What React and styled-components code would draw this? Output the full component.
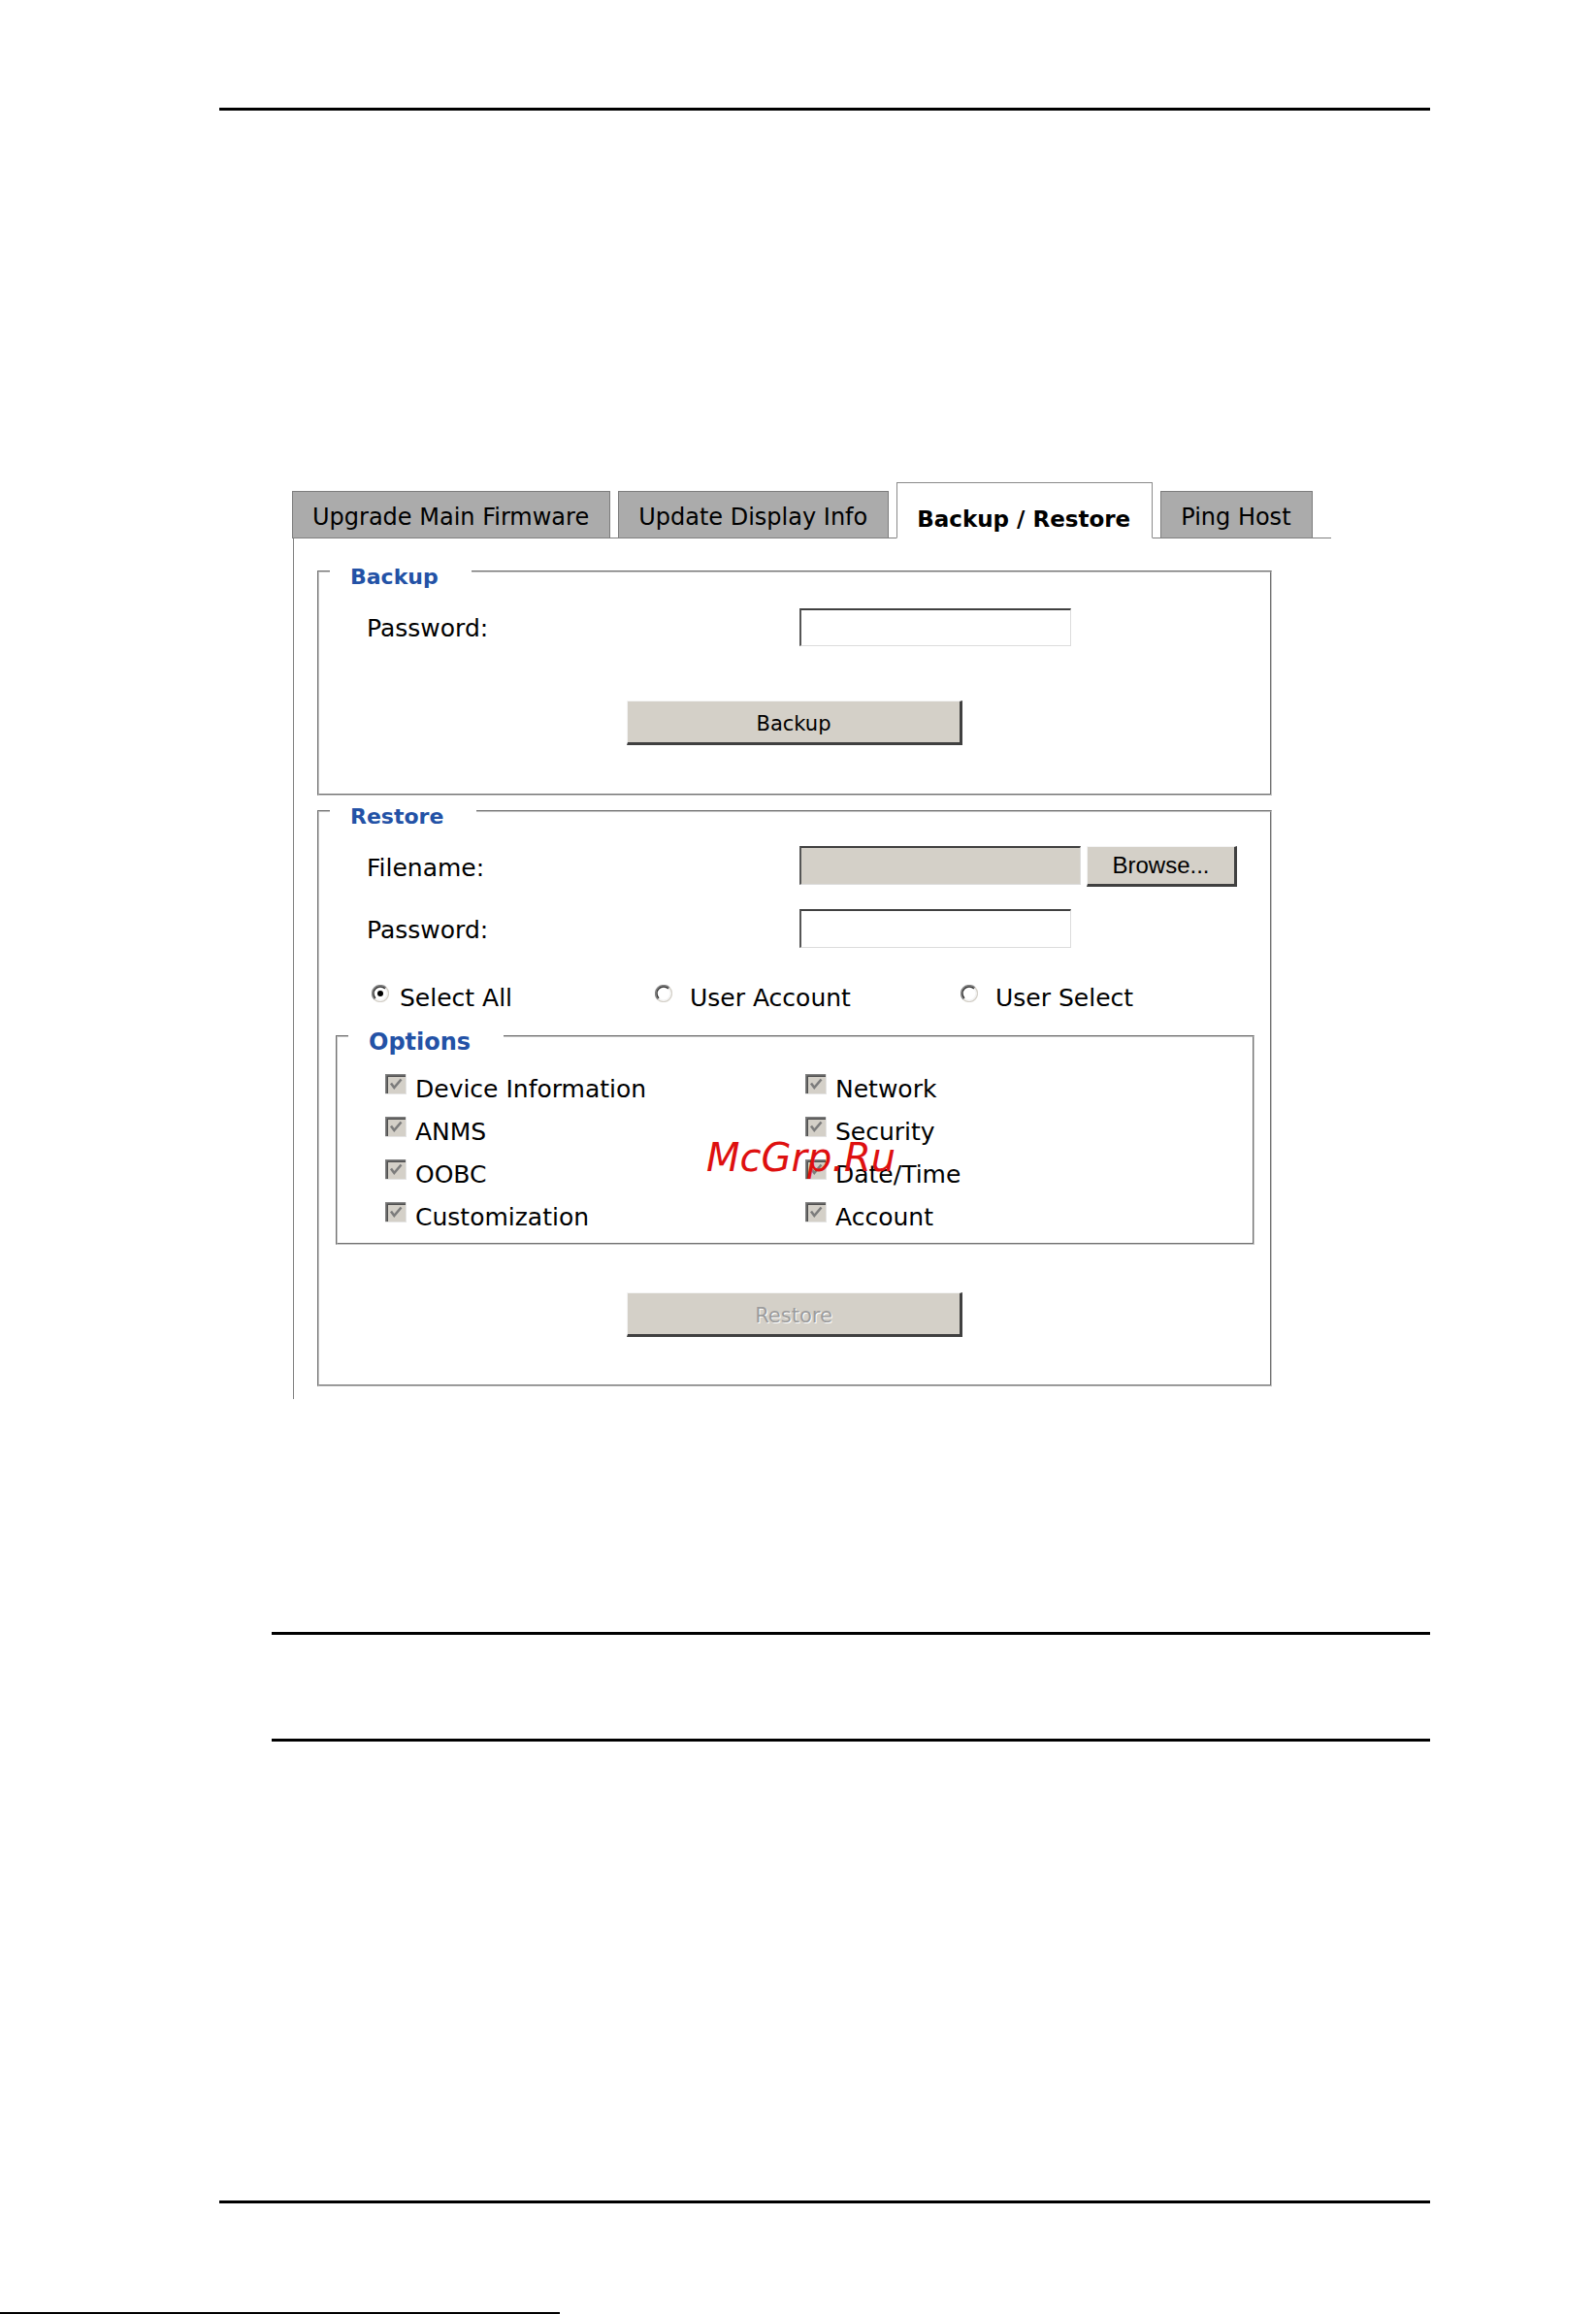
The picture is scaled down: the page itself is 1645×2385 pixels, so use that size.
import React from "react";
import styled, { createGlobalStyle } from "styled-components";

const GlobalStyle = createGlobalStyle`
  html, body { margin: 0; padding: 0; background: #fff; }
  body { font-family: "DejaVu Sans", Verdana, sans-serif; color: #000; }
  * { box-sizing: border-box; }
`;

const Page = styled.div`
  position: relative;
  width: 1645px;
  height: 2385px;
  overflow: hidden;
  background: #fff;
  display: flex;
  flex-direction: column;
  align-items: flex-start;
`;

const Rule = styled.div`
  flex-shrink: 0;
  margin-top: ${(p) => p.$top}px;
  margin-left: ${(p) => p.$left}px;
  width: ${(p) => p.$width}px;
  height: ${(p) => p.$h || 3}px;
  background: #000;
`;

const TabsArea = styled.div`
  margin-top: 383px;
  margin-left: 301px;
  display: flex;
  flex-direction: column;
`;

const TabBar = styled.div`
  display: flex;
  align-items: flex-end;
  gap: 8px;
  width: 1071px;
  border-bottom: 1px solid #808080;
`;

const Tab = styled.div`
  height: ${(p) => (p.$active ? 58 : 48)}px;
  margin-bottom: ${(p) => (p.$active ? -1 : 0)}px;
  padding: 0 ${(p) => (p.$active ? 22 : 21)}px ${(p) => (p.$active ? 5 : 7)}px 20px;
  display: flex;
  align-items: flex-end;
  background: ${(p) => (p.$active ? "#fff" : "#ababab")};
  border: 1px solid ${(p) => (p.$active ? "#8a8a8a" : "#7c7c7c")};
  border-bottom: ${(p) => (p.$active ? "1px solid #fff" : "none")};
  font-size: ${(p) => (p.$active ? 23 : 24)}px;
  font-weight: ${(p) => (p.$active ? 700 : 400)};
  line-height: 28px;
  white-space: nowrap;
  color: #000;
`;

const Panel = styled.div`
  margin-left: 1px;
  border-left: 1px solid #808080;
  padding: 14px 0 13px 24px;
  display: flex;
  flex-direction: column;
`;

const Group = styled.fieldset`
  width: ${(p) => (p.$width ? `${p.$width}px` : "auto")};
  margin: ${(p) => p.$margin || "0"};
  padding: 0;
  min-width: 0;
  border: 2px groove #c4c4c4;
`;

/* the title text sits just below the frame line, as in the reference */
const GroupTitle = styled.legend`
  margin-left: 11px;
  padding: 13px 34px 0 21px;
  font-size: ${(p) => p.$size || 22}px;
  font-weight: 700;
  line-height: 26px;
  color: #2352a6;
`;

const GroupBody = styled.div`
  display: flex;
  flex-direction: column;
  padding: ${(p) => p.$pad};
`;

const FormRow = styled.div`
  display: grid;
  grid-template-columns: 446px auto;
  align-items: center;
  padding-left: 49px;
  margin-top: ${(p) => p.$mt || 0}px;
`;

const Label = styled.span`
  font-size: 25px;
  line-height: 28px;
  margin-top: 3px;
`;

const Field = styled.input`
  width: ${(p) => p.$w}px;
  height: ${(p) => p.$h}px;
  margin: 0;
  padding: 0 4px;
  background: ${(p) => (p.$disabled ? "#d4d0c8" : "#fff")};
  border-style: solid;
  border-width: 2px 1px 1px 2px;
  border-color: #404040 #dcdcdc #dcdcdc #555;
  outline: none;
  font: 22px "DejaVu Sans", sans-serif;
`;

const FileBox = styled.div`
  display: flex;
  align-items: flex-start;
  gap: 6px;
`;

const Button = styled.button`
  align-self: center;
  width: 346px;
  height: 46px;
  margin: ${(p) => p.$mt || 0}px 0 0 0;
  padding: 3px 0 0 0;
  background: #d4d0c8;
  border-style: solid;
  border-width: 1px 3px 3px 1px;
  border-color: #f4f4f4 #404040 #404040 #f4f4f4;
  font-family: "DejaVu Sans", Verdana, sans-serif;
  font-size: 21px;
  color: ${(p) => (p.disabled ? "#9c9c9c" : "#000")};
  text-shadow: ${(p) => (p.disabled ? "1px 1px 0 #fff" : "none")};
`;

const BrowseButton = styled(Button)`
  align-self: flex-start;
  width: 155px;
  height: 42px;
  padding: 0;
  font-family: "Liberation Sans", Arial, sans-serif;
  font-size: 24px;
`;

const RadioGroup = styled.div`
  display: grid;
  grid-template-columns: 292px 315px auto;
  padding-left: 54px;
  margin-top: 38px;
`;

const RadioItem = styled.label`
  display: flex;
  align-items: flex-start;
  font-size: 25px;
  line-height: 28px;
  white-space: nowrap;
`;

const RadioText = styled.span`
  margin-left: ${(p) => (p.$spaced ? 18 : 11)}px;
`;

const RadioSvg = styled.svg`
  flex-shrink: 0;
  margin-top: 0;
`;

const CheckGrid = styled.div`
  display: grid;
  grid-template-columns: 433px auto;
  row-gap: 16px;
  padding: 22px 0 12px 49px;
`;

const CheckItem = styled.label`
  display: flex;
  align-items: flex-start;
  gap: 9px;
  font-size: 25px;
  line-height: 28px;
  white-space: nowrap;
`;

const CheckSvg = styled.svg`
  flex-shrink: 0;
  margin-top: -2px;
`;

const Watermark = styled.div`
  position: absolute;
  left: 728px;
  top: 1170px;
  font-family: "DejaVu Sans", sans-serif;
  font-style: italic;
  font-size: 40px;
  line-height: 46px;
  color: #de1010;
  white-space: nowrap;
  pointer-events: none;
`;

const Radio = ({ checked }) => (
  <RadioSvg width="18" height="18" viewBox="0 0 18 18">
    <circle cx="9" cy="9" r="8.5" fill="#fff" />
    <path d="M2.99 15.01 A8.5 8.5 0 0 1 15.01 2.99" stroke="#808080" strokeWidth="1.4" fill="none" />
    <path d="M4.05 13.95 A7 7 0 0 1 13.95 4.05" stroke="#303030" strokeWidth="1.4" fill="none" />
    <path d="M15.01 2.99 A8.5 8.5 0 0 1 2.99 15.01" stroke="#d4d0c8" strokeWidth="1.4" fill="none" />
    <path d="M13.95 4.05 A7 7 0 0 1 4.05 13.95" stroke="#f2f2f2" strokeWidth="1.2" fill="none" />
    {checked && <circle cx="9" cy="9" r="3" fill="#000" />}
  </RadioSvg>
);

const Check = () => (
  <CheckSvg width="22" height="21" viewBox="0 0 22 21">
    <rect x="0" y="0" width="22" height="21" fill="#e4e4e4" />
    <rect x="0" y="0" width="21" height="20" fill="#808080" />
    <rect x="1.5" y="1.5" width="19.5" height="18.5" fill="#505050" />
    <rect x="3" y="3" width="18" height="17" fill="#d4d0c8" />
    <path d="M6 9.5 L9.3 14 L16.5 5.5" stroke="#7c7c7c" strokeWidth="2.6" fill="none" />
  </CheckSvg>
);

const options = [
  ["Device Information", "Network"],
  ["ANMS", "Security"],
  ["OOBC", "Date/Time"],
  ["Customization", "Account"],
];

export default function App() {
  return (
    <>
      <GlobalStyle />
      <Page>
        <Rule $top={111} $left={226} $width={1248} />
        <TabsArea>
          <TabBar>
            <Tab>Upgrade Main Firmware</Tab>
            <Tab>Update Display Info</Tab>
            <Tab $active>Backup / Restore</Tab>
            <Tab>Ping Host</Tab>
          </TabBar>
          <Panel>
            <Group $width={984}>
              <GroupTitle>Backup</GroupTitle>
              <GroupBody $pad="19px 0 50px 0">
                <FormRow>
                  <Label>Password:</Label>
                  <Field type="password" $w={280} $h={39} readOnly />
                </FormRow>
                <Button $mt={56}>Backup</Button>
              </GroupBody>
            </Group>
            <Group $width={984} $margin="-4px 0 0 0">
              <GroupTitle>Restore</GroupTitle>
              <GroupBody $pad="17px 0 49px 0">
                <FormRow>
                  <Label>Filename:</Label>
                  <FileBox>
                    <Field type="text" $w={290} $h={40} $disabled readOnly />
                    <BrowseButton>Browse...</BrowseButton>
                  </FileBox>
                </FormRow>
                <FormRow $mt={23}>
                  <Label>Password:</Label>
                  <Field type="password" $w={280} $h={40} readOnly />
                </FormRow>
                <RadioGroup>
                  <RadioItem>
                    <Radio checked />
                    <RadioText>Select All</RadioText>
                  </RadioItem>
                  <RadioItem>
                    <Radio />
                    <RadioText $spaced>User Account</RadioText>
                  </RadioItem>
                  <RadioItem>
                    <Radio />
                    <RadioText $spaced>User Select</RadioText>
                  </RadioItem>
                </RadioGroup>
                <Group $margin="5px 16px 0 17px">
                  <GroupTitle $size={24}>Options</GroupTitle>
                  <CheckGrid>
                    {options.flat().map((o) => (
                      <CheckItem key={o}>
                        <Check />
                        <span>{o}</span>
                      </CheckItem>
                    ))}
                  </CheckGrid>
                </Group>
                <Button $mt={49} disabled>
                  Restore
                </Button>
              </GroupBody>
            </Group>
          </Panel>
        </TabsArea>
        <Rule $top={240} $left={280} $width={1194} />
        <Rule $top={107} $left={280} $width={1194} />
        <Rule $top={473} $left={226} $width={1248} />
        <Rule $top={112} $left={0} $width={577} $h={2} />
        <Watermark>McGrp.Ru</Watermark>
      </Page>
    </>
  );
}
